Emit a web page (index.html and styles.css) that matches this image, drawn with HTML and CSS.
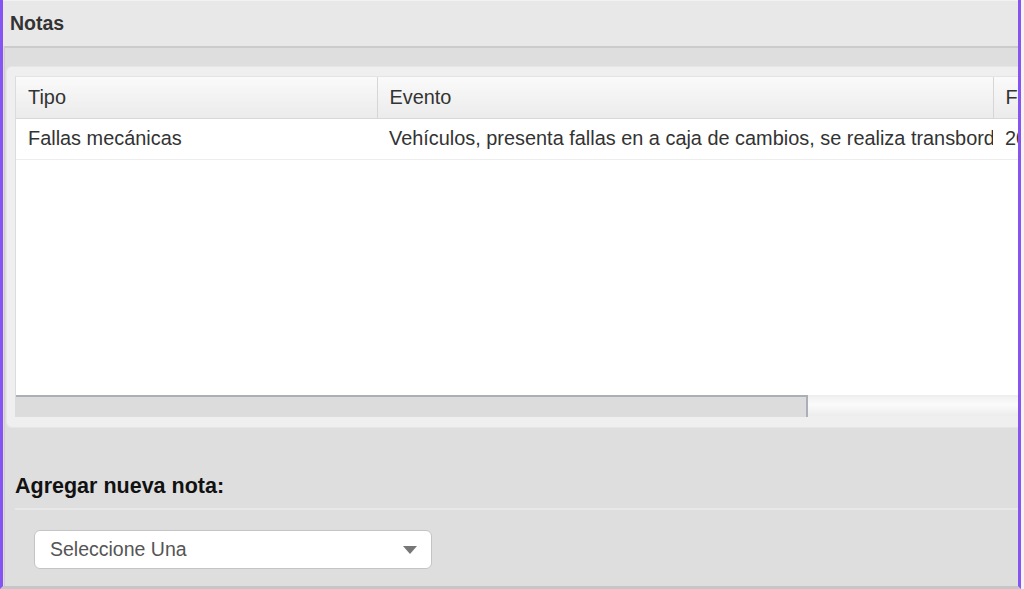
FILE: index.html
```html
<!DOCTYPE html>
<html lang="es">
<head>
    <meta charset="UTF-8">
    <meta name="viewport" content="width=device-width, initial-scale=1.0">
    <title>Notas</title>
    <link rel="stylesheet" href="styles.css">
</head>
<body>
    <div class="frame">
        <div class="title">Notas</div>
        <div class="section">
            <div class="band"></div>
            <div class="panel">
                <div class="grid">
                    <div class="grid__body">
                        <table class="grid__table">
                            <colgroup>
                                <col class="col-tipo">
                                <col class="col-evento">
                                <col class="col-fecha">
                            </colgroup>
                            <thead>
                                <tr>
                                    <th>Tipo</th>
                                    <th>Evento</th>
                                    <th>Fecha</th>
                                </tr>
                            </thead>
                            <tbody>
                                <tr>
                                    <td>Fallas mecánicas</td>
                                    <td>Vehículos, presenta fallas en a caja de cambios, se realiza transbordo</td>
                                    <td>2024-01-15</td>
                                </tr>
                            </tbody>
                        </table>
                    </div>
                    <div class="scroll">
                        <div class="scroll__thumb"></div>
                        <div class="scroll__rest"></div>
                    </div>
                </div>
            </div>
            <div class="add">
                <h2 class="add__title">Agregar nueva nota:</h2>
                <div class="add__line"></div>
                <div class="select">
                    <span class="select__text">Seleccione Una</span>
                    <span class="select__arrow"></span>
                </div>
            </div>
        </div>
    </div>
</body>
</html>
```

FILE: styles.css
```css
html, body{
    margin: 0;
    height: 100%;
}
body{
    background-color: #f4f4f4;
    font-family: "Liberation Sans", Arial, sans-serif;
    color: #333;
}
.frame{
    width: 1015px;
    height: 586px;
    border-left: 3px solid #8654f2;
    border-right: 3px solid #8654f2;
    border-bottom: 3px solid #c6c6c6;
    background-color: #dedede;
    overflow: hidden;
}
.title{
    height: 46px;
    line-height: 44px;
    padding-left: 7px;
    background-color: #e8e8e8;
    border-top: 1px solid #f2f2f2;
    box-sizing: border-box;
    font-size: 19.5px;
    font-weight: bold;
    color: #333;
}
.section{
    margin-left: 1px;
    border-left: 1px solid #cfcfcf;
    border-top: 2px solid #cbcbcb;
    height: 540px;
}
.band{
    height: 18px;
}
.panel{
    margin-left: 1px;
    padding: 9px 0 10px 8px;
    background-color: #efefef;
    border: 1px solid #e6e6e6;
    border-right: none;
    border-radius: 6px 0 0 6px;
}
.grid{
    border-left: 1px solid #dcdcdc;
    border-top: 1px solid #e4e4e4;
    overflow: hidden;
}
.grid__body{
    height: 318px;
    background-color: white;
    overflow: hidden;
}
.grid__table{
    border-collapse: collapse;
    width: 1200px;
    table-layout: fixed;
    font-size: 19.9px;
}
.col-tipo{ width: 361px; }
.col-evento{ width: 616px; }
.col-fecha{ width: 223px; }
.grid__table th{
    height: 41px;
    box-sizing: border-box;
    text-align: left;
    font-weight: normal;
    padding: 0 12px;
    color: #333;
    background: linear-gradient(#fafafa, #ebebeb);
    border-right: 1px solid #d6d6d6;
    border-bottom: 1px solid #d8d8d8;
    white-space: nowrap;
    overflow: hidden;
}
.grid__table td{
    height: 40px;
    padding: 0 12px;
    color: #333;
    border-bottom: 1px solid #ececec;
    white-space: nowrap;
    overflow: hidden;
}
.grid__table td:nth-child(2){
    padding-right: 2px;
    text-overflow: clip;
}
.scroll{
    display: flex;
    height: 22px;
}
.scroll__thumb{
    width: 790px;
    background-color: #dcdcdc;
    border-top: 2px solid #a9b0b8;
    border-right: 2px solid #a9b0b8;
}
.scroll__rest{
    flex: 1;
    margin-top: 2px;
    margin-bottom: 1px;
    background: linear-gradient(#f2f2f2, #fbfbfb 40%, #ececec);
}
.add{
    padding: 45px 0 0 10px;
}
.add__title{
    margin: 0;
    font-size: 21.5px;
    font-weight: bold;
    color: #111;
    line-height: 26px;
}
.add__line{
    margin-top: 9px;
    height: 2px;
    background-color: #e8e8e8;
}
.select{
    display: flex;
    align-items: center;
    justify-content: space-between;
    margin: 20px 0 0 19px;
    width: 398px;
    height: 39px;
    box-sizing: border-box;
    padding: 0 14px 0 15px;
    background-color: white;
    border: 1px solid #c4c4c4;
    border-radius: 6px;
}
.select__text{
    font-size: 19.5px;
    color: #555;
}
.select__arrow{
    width: 0;
    height: 0;
    border-left: 7px solid transparent;
    border-right: 7px solid transparent;
    border-top: 8px solid #777;
}
```
